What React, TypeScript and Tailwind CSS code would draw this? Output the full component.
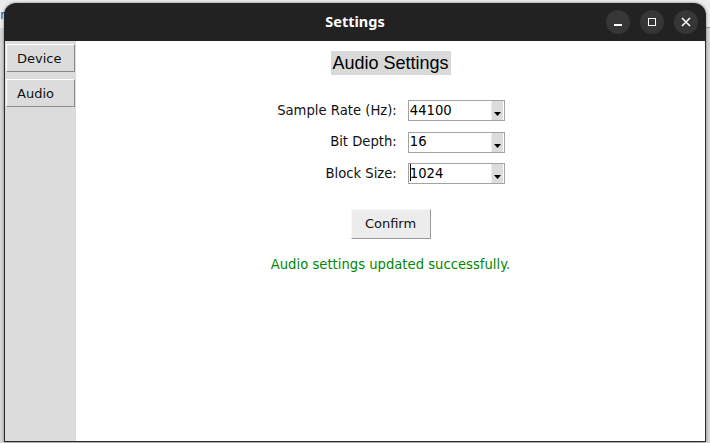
import React from "react";

const font = { fontFamily: '"DejaVu Sans", "Liberation Sans", sans-serif' };

function Combo({ value, caret }: { value: string; caret?: boolean }) {
  return (
    <div className="flex h-[21px] w-[97px] items-center border border-[#a3a3a3] bg-white pl-[1px] pr-[1px]">
      <div className="relative flex flex-1 items-center text-[13.2px] leading-none text-black">
        {caret && <span className="absolute left-[0px] top-[-3px] h-[17px] w-[1px] bg-black" />}
        <span>{value}</span>
      </div>
      <div className="flex h-[19px] w-[12px] items-end justify-center border-l border-[#ececec] bg-[#dcdcdc] pb-[4px]">
        <svg width="7" height="4" viewBox="0 0 7 4">
          <polygon points="0,0 7,0 3.5,4" fill="#000" />
        </svg>
      </div>
    </div>
  );
}

function SideButton({ label }: { label: string }) {
  return (
    <div className="flex h-[28px] w-[69px] items-center justify-start border border-t-white border-l-white border-r-[#8a8a8a] border-b-[#8a8a8a] bg-[#dcdcdc] pl-[10px] pt-[1px] text-[13px] text-[#111]">
      {label}
    </div>
  );
}

export default function App() {
  return (
    <div className="relative h-[443px] w-[710px] overflow-hidden bg-[#d6d6d6]" style={font}>
      <div className="absolute left-[0px] top-[0px] h-[28px] w-[710px] bg-[#ececec]" />
      <div className="absolute left-[0px] top-[8px] text-[13px] leading-none text-[#2a5db0]">n</div>
      <div className="absolute left-[706px] top-[27px] h-[1px] w-[4px] bg-[#9a9a9a]" />
      <div className="absolute left-[4px] top-[3px] flex h-[439px] w-[702px] flex-col overflow-hidden rounded-t-[12px] shadow-[0_0_3px_rgba(0,0,0,0.5)]">
        <div className="relative flex h-[38px] shrink-0 items-center justify-center bg-[#222222]">
          <span className="text-[14.5px] font-bold text-white" style={{ fontFamily: '"Noto Sans", "DejaVu Sans", sans-serif' }}>
            Settings
          </span>
          <div className="absolute right-[8px] top-[7px] flex gap-[10px]">
            <div className="flex h-[24px] w-[24px] items-center justify-center rounded-full bg-[#363636]">
              <div className="mt-[6px] h-[1.5px] w-[8px] bg-white" />
            </div>
            <div className="flex h-[24px] w-[24px] items-center justify-center rounded-full bg-[#363636]">
              <div className="h-[8px] w-[8px] border-[1.5px] border-white" />
            </div>
            <div className="flex h-[24px] w-[24px] items-center justify-center rounded-full bg-[#363636]">
              <svg width="10" height="10" viewBox="0 0 10 10">
                <path d="M1 1 L9 9 M9 1 L1 9" stroke="#fff" strokeWidth="1.6" />
              </svg>
            </div>
          </div>
        </div>
        <div className="flex flex-1 border-x border-b border-[#2b2b2b] bg-white">
          <div className="flex w-[71px] flex-col gap-[7px] bg-[#dcdcdc] pl-[1px] pt-[3px]">
            <SideButton label="Device" />
            <SideButton label="Audio" />
          </div>
          <div className="flex flex-1 flex-col items-center pt-[10px]">
            <div
              className="flex h-[24px] w-[120px] items-center justify-center bg-[#d9d9d9] text-[18px] text-black"
              style={{ fontFamily: '"Liberation Sans", Arial, sans-serif' }}
            >
              Audio Settings
            </div>
            <div className="mt-[25px] grid grid-cols-[auto_auto] items-center gap-x-[11px] gap-y-[10.5px] pl-[1px] text-[13.2px] text-[#111]">
              <div className="text-right">Sample Rate (Hz):</div>
              <Combo value="44100" />
              <div className="text-right">Bit Depth:</div>
              <Combo value="16" />
              <div className="text-right">Block Size:</div>
              <Combo value="1024" caret />
            </div>
            <div className="mt-[25px] flex h-[30px] w-[80px] items-center justify-center border border-t-[#f8f8f8] border-l-[#f8f8f8] border-r-[#9a9a9a] border-b-[#9a9a9a] bg-[#ececec] text-[13px] text-[#111]">
              Confirm
            </div>
            <div className="mt-[18px] text-[13.2px] leading-[16px] text-[#008800]">
              Audio settings updated successfully.
            </div>
          </div>
        </div>
      </div>
    </div>
  );
}
